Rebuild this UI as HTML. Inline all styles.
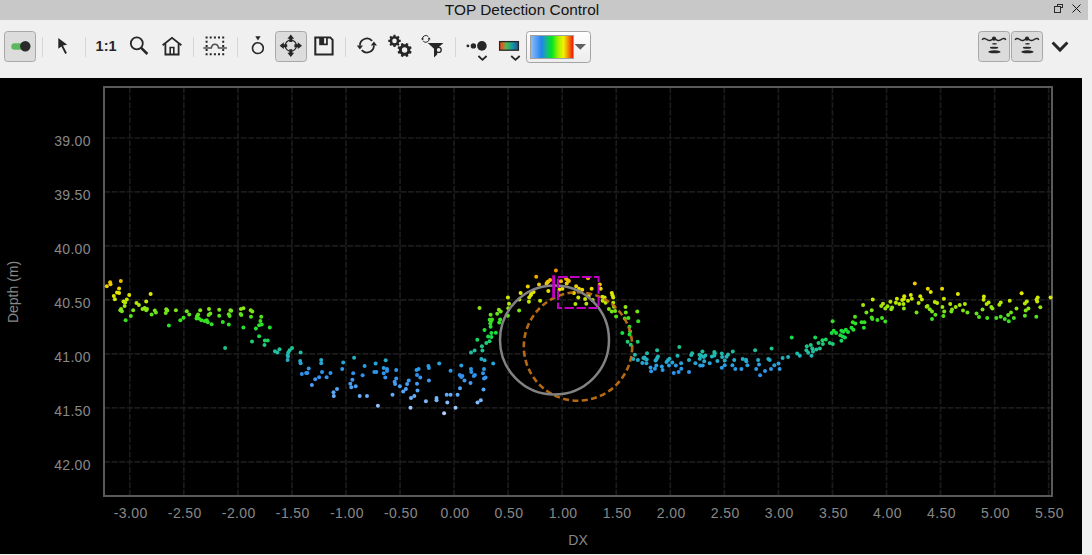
<!DOCTYPE html><html><head><meta charset="utf-8"><style>html,body{margin:0;padding:0;width:1092px;height:555px;overflow:hidden;background:#f0f0f0}svg{display:block}text{font-family:"Liberation Sans",sans-serif}</style></head><body>
<svg width="1092" height="555" viewBox="0 0 1092 555">
<rect x="0" y="0" width="1092" height="555" fill="#f0f0f0"/>
<rect x="0" y="0" width="1088" height="20" fill="#c8c8c8"/>
<text x="522" y="15" font-size="15.4" fill="#141414" text-anchor="middle">TOP Detection Control</text>
<g fill="none" stroke="#2c2c2c" stroke-width="1"><rect x="1057.5" y="4.5" width="5" height="3"/><rect x="1054.5" y="6.5" width="6" height="6" fill="#c8c8c8"/></g>
<path d="M1072.5,4.5 L1080.5,12.5 M1080.5,4.5 L1072.5,12.5" stroke="#111" stroke-width="1" fill="none"/>
<rect x="0" y="20" width="1092" height="58" fill="#f0f0f0"/>
<g id="icons"><rect x="4.5" y="31.5" width="31" height="30" rx="3" fill="#dcdcdc" stroke="#a8a8a8"/><rect x="11.3" y="43.2" width="13" height="6.6" rx="3.3" fill="#5cb85c"/><circle cx="25.3" cy="46.3" r="5.2" fill="#2a2a2a"/><path d="M42.5,37 V57 M85.5,37 V57 M193.5,37 V57 M237.5,37 V57 M345.5,37 V57 M455.5,37 V57" stroke="#d6d6d6" stroke-width="1"/><path d="M58.3,38 L67.2,44.8 L63,45.4 L66.9,53.1 L65.2,54 L61.4,46.6 L58.3,48.8 Z" fill="#262626"/><text x="95.6" y="51.2" font-size="14.5" font-weight="bold" fill="#262626">1:1</text><circle cx="136.8" cy="43.3" r="6" fill="none" stroke="#262626" stroke-width="1.8"/><path d="M141.2,47.8 L147.4,54" stroke="#262626" stroke-width="2.6" fill="none"/><g fill="none" stroke="#262626" stroke-width="1.8"><path d="M162.6,45.2 L172,37.9 L181.4,45.2"/><path d="M165.4,43.5 V54.5 H178.6 V43.5"/><path d="M170.2,54.5 V47.5 H173.8 V54.5" stroke-width="1.6"/></g><path d="M205.6,36.6 h2 v2 h-2 Z M205.6,40.8 h2 v2 h-2 Z M205.6,45.0 h2 v2 h-2 Z M205.6,49.1 h2 v2 h-2 Z M205.6,53.3 h2 v2 h-2 Z M209.7,36.6 h2 v2 h-2 Z M209.7,53.3 h2 v2 h-2 Z M213.9,36.6 h2 v2 h-2 Z M213.9,53.3 h2 v2 h-2 Z M218.0,36.6 h2 v2 h-2 Z M218.0,53.3 h2 v2 h-2 Z M222.2,36.6 h2 v2 h-2 Z M222.2,40.8 h2 v2 h-2 Z M222.2,45.0 h2 v2 h-2 Z M222.2,49.1 h2 v2 h-2 Z M222.2,53.3 h2 v2 h-2 Z" fill="#262626"/><path d="M203.3,48 H211.3 C212.3,43 217.6,43 218.6,48 H226.9" fill="none" stroke="#505050" stroke-width="1.6"/><path d="M255.3,36.3 H260.6 L257.95,40.6 Z" fill="#262626"/><circle cx="257.9" cy="48.15" r="5.4" fill="none" stroke="#262626" stroke-width="1.6"/><rect x="275.5" y="31.5" width="31" height="30" rx="3" fill="#dcdcdc" stroke="#a8a8a8"/><circle cx="290.8" cy="45.7" r="5.6" fill="none" stroke="#262626" stroke-width="1.2"/><path d="M290.80,34.50 L294.20,38.70 L287.40,38.70 Z M292.30,38.70 L292.30,42.10 L289.30,42.10 L289.30,38.70 Z M290.80,56.90 L287.40,52.70 L294.20,52.70 Z M289.30,52.70 L289.30,49.30 L292.30,49.30 L292.30,52.70 Z M279.60,45.70 L283.80,42.30 L283.80,49.10 Z M283.80,44.20 L287.20,44.20 L287.20,47.20 L283.80,47.20 Z M302.00,45.70 L297.80,49.10 L297.80,42.30 Z M297.80,47.20 L294.40,47.20 L294.40,44.20 L297.80,44.20 Z" fill="#262626"/><path d="M315.3,37.4 H330.2 L332.6,39.8 V54.6 H315.3 Z" fill="none" stroke="#262626" stroke-width="2"/><rect x="319.2" y="37.4" width="8.6" height="7.8" fill="#262626"/><rect x="324.1" y="38.2" width="2" height="5.3" fill="#f0f0f0"/><path d="M359.90,45.50 A7,7 0 0,1 372.10,40.82 M373.90,45.50 A7,7 0 0,1 361.70,50.18" fill="none" stroke="#262626" stroke-width="1.8"/><path d="M356.8,45.6 H363 L359.9,49.6 Z M370.8,45.4 H377 L373.9,41.4 Z" fill="#262626"/><path d="M393.32,36.14 L393.47,34.69 L395.53,34.69 L395.68,36.14 L397.03,36.70 L398.16,35.77 L399.63,37.24 L398.70,38.37 L399.26,39.72 L400.71,39.87 L400.71,41.93 L399.26,42.08 L398.70,43.43 L399.63,44.56 L398.16,46.03 L397.03,45.10 L395.68,45.66 L395.53,47.11 L393.47,47.11 L393.32,45.66 L391.97,45.10 L390.84,46.03 L389.37,44.56 L390.30,43.43 L389.74,42.08 L388.29,41.93 L388.29,39.87 L389.74,39.72 L390.30,38.37 L389.37,37.24 L390.84,35.77 L391.97,36.70 Z M392.20,40.90 a2.30,2.30 0 1,0 4.60,0 a2.30,2.30 0 1,0 -4.60,0 Z M410.24,50.85 L411.71,51.65 L410.79,53.86 L409.18,53.39 L407.99,54.58 L408.46,56.19 L406.25,57.11 L405.45,55.64 L403.75,55.64 L402.95,57.11 L400.74,56.19 L401.21,54.58 L400.02,53.39 L398.41,53.86 L397.49,51.65 L398.96,50.85 L398.96,49.15 L397.49,48.35 L398.41,46.14 L400.02,46.61 L401.21,45.42 L400.74,43.81 L402.95,42.89 L403.75,44.36 L405.45,44.36 L406.25,42.89 L408.46,43.81 L407.99,45.42 L409.18,46.61 L410.79,46.14 L411.71,48.35 L410.24,49.15 Z M401.90,50.00 a2.70,2.70 0 1,0 5.40,0 a2.70,2.70 0 1,0 -5.40,0 Z" fill="#262626" fill-rule="evenodd"/><path d="M422.40,38.90 A3.4,3.4 0 0,1 428.40,36.71 M429.20,38.90 A3.4,3.4 0 0,1 423.20,41.09" fill="none" stroke="#262626" stroke-width="1"/><path d="M421,38.6 H424 L422.5,40.6 Z M427.6,39.2 H430.6 L429.1,37.2 Z" fill="#262626"/><path d="M427.8,43 H443.4 L437.2,48.4 V54.6 L434,57.4 V48.7 Z" fill="#262626"/><circle cx="438.7" cy="49.9" r="2.5" fill="#f0f0f0" stroke="#262626" stroke-width="1.3"/><circle cx="467.9" cy="45.9" r="1.4" fill="#262626"/><circle cx="473.4" cy="45.9" r="2.7" fill="#262626"/><circle cx="481.9" cy="45.9" r="4.8" fill="#262626"/><path d="M478.4,56 L482.5,59.8 L486.6,56 M511.2,56 L515.5,59.8 L519.7,56" fill="none" stroke="#262626" stroke-width="1.8"/><defs><linearGradient id="cbi" x1="0" x2="1" y1="0" y2="0"><stop offset="0" stop-color="#e84a1e"/><stop offset="0.12" stop-color="#e05828"/><stop offset="0.35" stop-color="#58b848"/><stop offset="0.65" stop-color="#10a0a0"/><stop offset="1" stop-color="#2a4c9c"/></linearGradient><linearGradient id="cbb" x1="0" x2="1" y1="0" y2="0"><stop offset="0" stop-color="#94bef8"/><stop offset="0.25" stop-color="#2284f0"/><stop offset="0.37" stop-color="#18b48c"/><stop offset="0.5" stop-color="#00e81c"/><stop offset="0.64" stop-color="#a0f000"/><stop offset="0.77" stop-color="#f4f000"/><stop offset="0.87" stop-color="#f09000"/><stop offset="1" stop-color="#f01000"/></linearGradient><linearGradient id="cmb" x1="0" x2="0" y1="0" y2="1"><stop offset="0" stop-color="#ffffff"/><stop offset="1" stop-color="#ececec"/></linearGradient></defs><rect x="499.6" y="41.6" width="18.8" height="8.6" fill="url(#cbi)" stroke="#262626" stroke-width="1.3"/><rect x="526.5" y="31.5" width="64" height="31" rx="3" fill="url(#cmb)" stroke="#a4a4a4"/><rect x="530.5" y="35.5" width="43" height="23" fill="url(#cbb)" stroke="#a0a0a0"/><path d="M574.5,44 H586 L580.25,49.7 Z" fill="#606060"/><rect x="978.5" y="31.5" width="31" height="30" rx="3" fill="#dcdcdc" stroke="#a8a8a8"/><g transform="translate(0.0,0)" fill="none" stroke="#262626"><path d="M982.2,39.8 C983,38.2 984.5,38 986,39 C987.5,40.2 989,40.9 990.5,40.3 C992,39.6 993,38.8 994,38.8 C995,38.8 996,39.6 997.5,40.3 C999,40.9 1000.5,40.2 1002,39 C1003.5,38 1005,38.2 1005.8,39.8" stroke-width="1.5"/><circle cx="994" cy="38.7" r="2.1" fill="#262626" stroke="none"/><path d="M992.1,43.4 Q994.5,42.4 996.9,43.4 L996.8,44.3 Q994.5,44.9 992.2,44.3 Z" fill="#262626" stroke="none"/><path d="M990.0,47.1 Q994.1,46.2 998.1,47.1 L998,48.2 Q994.1,49.2 990.1,48.2 Z" fill="#262626" stroke="none"/><path d="M988.5,51.3 Q994.4,49.4 1000.4,51.3 L1000.2,52.4 Q994.4,54.1 988.7,52.4 Z" fill="#262626" stroke="none"/></g><rect x="1011.5" y="31.5" width="31" height="30" rx="3" fill="#dcdcdc" stroke="#a8a8a8"/><g transform="translate(33.0,0)" fill="none" stroke="#262626"><path d="M982.2,39.8 C983,38.2 984.5,38 986,39 C987.5,40.2 989,40.9 990.5,40.3 C992,39.6 993,38.8 994,38.8 C995,38.8 996,39.6 997.5,40.3 C999,40.9 1000.5,40.2 1002,39 C1003.5,38 1005,38.2 1005.8,39.8" stroke-width="1.5"/><circle cx="994" cy="38.7" r="2.1" fill="#262626" stroke="none"/><path d="M992.1,43.4 Q994.5,42.4 996.9,43.4 L996.8,44.3 Q994.5,44.9 992.2,44.3 Z" fill="#262626" stroke="none"/><path d="M990.0,47.1 Q994.1,46.2 998.1,47.1 L998,48.2 Q994.1,49.2 990.1,48.2 Z" fill="#262626" stroke="none"/><path d="M988.5,51.3 Q994.4,49.4 1000.4,51.3 L1000.2,52.4 Q994.4,54.1 988.7,52.4 Z" fill="#262626" stroke="none"/></g><path d="M1052.6,42.5 L1060,50 L1067.4,42.5" fill="none" stroke="#262626" stroke-width="3"/></g>
<rect x="0" y="78" width="1082" height="476" fill="#000"/>
<path d="M129.80,87 V496 M183.85,87 V496 M237.90,87 V496 M291.95,87 V496 M346.00,87 V496 M400.05,87 V496 M454.10,87 V496 M508.15,87 V496 M562.20,87 V496 M616.25,87 V496 M670.30,87 V496 M724.35,87 V496 M778.40,87 V496 M832.45,87 V496 M886.50,87 V496 M940.55,87 V496 M994.60,87 V496 M1048.65,87 V496 M104,138.00 H1052 M104,191.97 H1052 M104,245.95 H1052 M104,299.93 H1052 M104,353.90 H1052 M104,407.88 H1052 M104,461.85 H1052" stroke="#1b1b1b" stroke-width="1.7" stroke-dasharray="6 1.6" fill="none"/>
<rect x="104.0" y="87.0" width="948" height="409" fill="none" stroke="#5a5a5a" stroke-width="2"/>
<text x="90.8" y="146.0" font-size="14" letter-spacing="0.3" fill="#888888" text-anchor="end">39.00</text>
<text x="90.8" y="200.0" font-size="14" letter-spacing="0.3" fill="#888888" text-anchor="end">39.50</text>
<text x="90.8" y="253.9" font-size="14" letter-spacing="0.3" fill="#888888" text-anchor="end">40.00</text>
<text x="90.8" y="307.9" font-size="14" letter-spacing="0.3" fill="#888888" text-anchor="end">40.50</text>
<text x="90.8" y="361.9" font-size="14" letter-spacing="0.3" fill="#888888" text-anchor="end">41.00</text>
<text x="90.8" y="415.9" font-size="14" letter-spacing="0.3" fill="#888888" text-anchor="end">41.50</text>
<text x="90.8" y="469.9" font-size="14" letter-spacing="0.3" fill="#888888" text-anchor="end">42.00</text>
<text x="130.7" y="518" font-size="14" letter-spacing="0.4" fill="#888888" text-anchor="middle">-3.00</text>
<text x="184.8" y="518" font-size="14" letter-spacing="0.4" fill="#888888" text-anchor="middle">-2.50</text>
<text x="238.8" y="518" font-size="14" letter-spacing="0.4" fill="#888888" text-anchor="middle">-2.00</text>
<text x="292.8" y="518" font-size="14" letter-spacing="0.4" fill="#888888" text-anchor="middle">-1.50</text>
<text x="346.9" y="518" font-size="14" letter-spacing="0.4" fill="#888888" text-anchor="middle">-1.00</text>
<text x="400.9" y="518" font-size="14" letter-spacing="0.4" fill="#888888" text-anchor="middle">-0.50</text>
<text x="455.0" y="518" font-size="14" letter-spacing="0.4" fill="#888888" text-anchor="middle">0.00</text>
<text x="509.0" y="518" font-size="14" letter-spacing="0.4" fill="#888888" text-anchor="middle">0.50</text>
<text x="563.1" y="518" font-size="14" letter-spacing="0.4" fill="#888888" text-anchor="middle">1.00</text>
<text x="617.1" y="518" font-size="14" letter-spacing="0.4" fill="#888888" text-anchor="middle">1.50</text>
<text x="671.2" y="518" font-size="14" letter-spacing="0.4" fill="#888888" text-anchor="middle">2.00</text>
<text x="725.2" y="518" font-size="14" letter-spacing="0.4" fill="#888888" text-anchor="middle">2.50</text>
<text x="779.3" y="518" font-size="14" letter-spacing="0.4" fill="#888888" text-anchor="middle">3.00</text>
<text x="833.4" y="518" font-size="14" letter-spacing="0.4" fill="#888888" text-anchor="middle">3.50</text>
<text x="887.4" y="518" font-size="14" letter-spacing="0.4" fill="#888888" text-anchor="middle">4.00</text>
<text x="941.4" y="518" font-size="14" letter-spacing="0.4" fill="#888888" text-anchor="middle">4.50</text>
<text x="995.5" y="518" font-size="14" letter-spacing="0.4" fill="#888888" text-anchor="middle">5.00</text>
<text x="1049.5" y="518" font-size="14" letter-spacing="0.4" fill="#888888" text-anchor="middle">5.50</text>
<text x="578" y="545" font-size="14" fill="#888888" text-anchor="middle">DX</text>
<text transform="translate(18,292) rotate(-90)" x="0" y="0" font-size="14" fill="#888888" text-anchor="middle">Depth (m)</text>
<g>
<circle cx="106.8" cy="286.2" r="2" fill="#edcf00"/>
<circle cx="110.1" cy="282.2" r="2" fill="#f0c100"/>
<circle cx="110.5" cy="284.3" r="2" fill="#eec800"/>
<circle cx="120.8" cy="281.0" r="2" fill="#f0bc00"/>
<circle cx="119.1" cy="288.6" r="2" fill="#ebd800"/>
<circle cx="117.0" cy="292.4" r="2" fill="#e8e600"/>
<circle cx="119.1" cy="293.0" r="2" fill="#e8e800"/>
<circle cx="113.8" cy="295.9" r="2" fill="#dae800"/>
<circle cx="114.9" cy="299.2" r="2" fill="#cae800"/>
<circle cx="129.2" cy="295.1" r="2" fill="#dee800"/>
<circle cx="126.8" cy="299.5" r="2" fill="#c9e800"/>
<circle cx="123.5" cy="301.6" r="2" fill="#bfe800"/>
<circle cx="125.1" cy="302.4" r="2" fill="#bbe800"/>
<circle cx="124.6" cy="306.0" r="2" fill="#a0e60a"/>
<circle cx="120.3" cy="310.2" r="2" fill="#7ee418"/>
<circle cx="121.9" cy="311.3" r="2" fill="#76e319"/>
<circle cx="121.1" cy="308.9" r="2" fill="#89e514"/>
<circle cx="125.6" cy="320.3" r="2" fill="#37e021"/>
<circle cx="130.8" cy="315.9" r="2" fill="#56e21d"/>
<circle cx="133.2" cy="310.2" r="2" fill="#7ee418"/>
<circle cx="136.5" cy="302.9" r="2" fill="#b8e800"/>
<circle cx="138.9" cy="304.9" r="2" fill="#a9e706"/>
<circle cx="146.2" cy="301.6" r="2" fill="#bfe800"/>
<circle cx="150.6" cy="294.0" r="2" fill="#e3e800"/>
<circle cx="142.5" cy="308.9" r="2" fill="#89e514"/>
<circle cx="144.6" cy="308.1" r="2" fill="#8fe512"/>
<circle cx="146.2" cy="310.2" r="2" fill="#7ee418"/>
<circle cx="147.0" cy="308.9" r="2" fill="#89e514"/>
<circle cx="151.6" cy="314.6" r="2" fill="#5fe21c"/>
<circle cx="154.8" cy="310.5" r="2" fill="#7ce418"/>
<circle cx="155.9" cy="312.5" r="2" fill="#6ee31a"/>
<circle cx="166.2" cy="309.2" r="2" fill="#86e415"/>
<circle cx="165.7" cy="313.0" r="2" fill="#6be31a"/>
<circle cx="167.3" cy="310.5" r="2" fill="#7ce418"/>
<circle cx="168.9" cy="325.5" r="2" fill="#2be02c"/>
<circle cx="175.9" cy="310.2" r="2" fill="#7ee418"/>
<circle cx="180.3" cy="320.3" r="2" fill="#37e021"/>
<circle cx="183.5" cy="317.8" r="2" fill="#48e11e"/>
<circle cx="186.8" cy="311.3" r="2" fill="#76e319"/>
<circle cx="189.2" cy="314.6" r="2" fill="#5fe21c"/>
<circle cx="197.0" cy="316.2" r="2" fill="#53e21d"/>
<circle cx="198.1" cy="314.6" r="2" fill="#5fe21c"/>
<circle cx="196.5" cy="318.6" r="2" fill="#42e11f"/>
<circle cx="198.9" cy="318.6" r="2" fill="#42e11f"/>
<circle cx="200.2" cy="310.2" r="2" fill="#7ee418"/>
<circle cx="201.3" cy="320.3" r="2" fill="#37e021"/>
<circle cx="204.6" cy="321.1" r="2" fill="#35e022"/>
<circle cx="206.7" cy="320.3" r="2" fill="#37e021"/>
<circle cx="207.8" cy="322.2" r="2" fill="#33e025"/>
<circle cx="211.6" cy="324.3" r="2" fill="#2ee029"/>
<circle cx="209.0" cy="308.9" r="2" fill="#89e514"/>
<circle cx="208.6" cy="315.1" r="2" fill="#5be21c"/>
<circle cx="210.3" cy="313.5" r="2" fill="#67e31b"/>
<circle cx="219.2" cy="309.7" r="2" fill="#82e417"/>
<circle cx="219.2" cy="315.7" r="2" fill="#57e21d"/>
<circle cx="950.2" cy="304.0" r="2" fill="#b0e703"/>
<circle cx="952.0" cy="309.5" r="2" fill="#84e416"/>
<circle cx="951.3" cy="311.6" r="2" fill="#74e319"/>
<circle cx="955.7" cy="306.9" r="2" fill="#99e60d"/>
<circle cx="959.7" cy="305.1" r="2" fill="#a8e707"/>
<circle cx="957.9" cy="294.1" r="2" fill="#e3e800"/>
<circle cx="964.9" cy="304.0" r="2" fill="#b0e703"/>
<circle cx="963.0" cy="310.5" r="2" fill="#7ce418"/>
<circle cx="967.4" cy="312.4" r="2" fill="#6fe31a"/>
<circle cx="976.5" cy="313.5" r="2" fill="#67e31b"/>
<circle cx="979.0" cy="317.1" r="2" fill="#4de11e"/>
<circle cx="982.5" cy="309.5" r="2" fill="#84e416"/>
<circle cx="983.9" cy="296.5" r="2" fill="#d7e800"/>
<circle cx="983.6" cy="299.8" r="2" fill="#c7e800"/>
<circle cx="986.6" cy="304.0" r="2" fill="#b0e703"/>
<circle cx="988.6" cy="302.5" r="2" fill="#bae800"/>
<circle cx="987.2" cy="317.9" r="2" fill="#47e11e"/>
<circle cx="991.3" cy="306.9" r="2" fill="#99e60d"/>
<circle cx="992.4" cy="308.4" r="2" fill="#8de512"/>
<circle cx="996.3" cy="317.9" r="2" fill="#47e11e"/>
<circle cx="999.3" cy="304.7" r="2" fill="#aae706"/>
<circle cx="1000.7" cy="302.5" r="2" fill="#bae800"/>
<circle cx="1000.7" cy="316.8" r="2" fill="#4fe11d"/>
<circle cx="1004.8" cy="319.0" r="2" fill="#3fe01f"/>
<circle cx="1008.1" cy="314.9" r="2" fill="#5ce21c"/>
<circle cx="1011.0" cy="312.4" r="2" fill="#6fe31a"/>
<circle cx="1008.8" cy="321.2" r="2" fill="#35e023"/>
<circle cx="1009.7" cy="300.7" r="2" fill="#c3e800"/>
<circle cx="1013.9" cy="317.9" r="2" fill="#47e11e"/>
<circle cx="1016.5" cy="308.4" r="2" fill="#8de512"/>
<circle cx="1021.6" cy="293.2" r="2" fill="#e7e800"/>
<circle cx="1024.9" cy="303.6" r="2" fill="#b3e802"/>
<circle cx="1026.8" cy="301.4" r="2" fill="#c0e800"/>
<circle cx="1025.7" cy="310.5" r="2" fill="#7ce418"/>
<circle cx="1028.4" cy="308.4" r="2" fill="#8de512"/>
<circle cx="1024.9" cy="315.7" r="2" fill="#57e21d"/>
<circle cx="1037.7" cy="297.4" r="2" fill="#d3e800"/>
<circle cx="1037.2" cy="301.4" r="2" fill="#c0e800"/>
<circle cx="1036.6" cy="299.6" r="2" fill="#c9e800"/>
<circle cx="1040.3" cy="307.3" r="2" fill="#96e60f"/>
<circle cx="1036.3" cy="316.8" r="2" fill="#4fe11d"/>
<circle cx="1050.6" cy="297.4" r="2" fill="#d3e800"/>
<circle cx="230.4" cy="310.3" r="2" fill="#7ee418"/>
<circle cx="231.2" cy="310.8" r="2" fill="#7be419"/>
<circle cx="228.8" cy="314.3" r="2" fill="#61e21b"/>
<circle cx="229.6" cy="315.9" r="2" fill="#55e21d"/>
<circle cx="222.8" cy="322.1" r="2" fill="#33e024"/>
<circle cx="228.8" cy="324.4" r="2" fill="#2de029"/>
<circle cx="225.1" cy="348.1" r="2" fill="#20c38f"/>
<circle cx="240.9" cy="309.1" r="2" fill="#87e415"/>
<circle cx="243.4" cy="308.2" r="2" fill="#8fe512"/>
<circle cx="240.6" cy="314.0" r="2" fill="#63e21b"/>
<circle cx="241.3" cy="315.1" r="2" fill="#5be21c"/>
<circle cx="243.4" cy="327.6" r="2" fill="#26e030"/>
<circle cx="250.7" cy="310.3" r="2" fill="#7ee418"/>
<circle cx="252.3" cy="311.4" r="2" fill="#76e319"/>
<circle cx="251.0" cy="316.8" r="2" fill="#4fe11d"/>
<circle cx="261.2" cy="316.8" r="2" fill="#4fe11d"/>
<circle cx="260.4" cy="321.1" r="2" fill="#35e022"/>
<circle cx="259.1" cy="325.3" r="2" fill="#2be02b"/>
<circle cx="261.7" cy="324.4" r="2" fill="#2de029"/>
<circle cx="255.9" cy="328.6" r="2" fill="#23e032"/>
<circle cx="269.8" cy="327.6" r="2" fill="#26e030"/>
<circle cx="259.1" cy="336.2" r="2" fill="#15dd48"/>
<circle cx="252.0" cy="341.6" r="2" fill="#1cd06a"/>
<circle cx="264.9" cy="340.6" r="2" fill="#1bd364"/>
<circle cx="267.7" cy="340.6" r="2" fill="#1bd364"/>
<circle cx="264.5" cy="345.1" r="2" fill="#20c881"/>
<circle cx="275.0" cy="351.3" r="2" fill="#20be9e"/>
<circle cx="277.4" cy="352.4" r="2" fill="#20bca4"/>
<circle cx="279.5" cy="349.2" r="2" fill="#20c194"/>
<circle cx="292.0" cy="348.1" r="2" fill="#20c38f"/>
<circle cx="289.6" cy="350.3" r="2" fill="#20bf9a"/>
<circle cx="288.3" cy="352.4" r="2" fill="#20bca4"/>
<circle cx="287.6" cy="354.9" r="2" fill="#20b8af"/>
<circle cx="288.0" cy="356.5" r="2" fill="#21b4b7"/>
<circle cx="287.6" cy="360.1" r="2" fill="#24acc8"/>
<circle cx="300.6" cy="352.4" r="2" fill="#20bca4"/>
<circle cx="300.1" cy="361.0" r="2" fill="#25aacd"/>
<circle cx="300.6" cy="363.3" r="2" fill="#27a4d8"/>
<circle cx="321.2" cy="360.1" r="2" fill="#24acc8"/>
<circle cx="321.2" cy="363.3" r="2" fill="#27a4d8"/>
<circle cx="308.7" cy="368.6" r="2" fill="#2b9ae6"/>
<circle cx="306.1" cy="373.0" r="2" fill="#2e93ed"/>
<circle cx="307.4" cy="373.0" r="2" fill="#2e93ed"/>
<circle cx="301.8" cy="374.0" r="2" fill="#2f92ee"/>
<circle cx="322.0" cy="371.9" r="2" fill="#2e95eb"/>
<circle cx="330.5" cy="373.0" r="2" fill="#2e93ed"/>
<circle cx="319.1" cy="377.2" r="2" fill="#3593f1"/>
<circle cx="326.6" cy="377.2" r="2" fill="#3593f1"/>
<circle cx="315.2" cy="379.2" r="2" fill="#3a96f2"/>
<circle cx="311.9" cy="385.1" r="2" fill="#489ef4"/>
<circle cx="333.5" cy="392.2" r="2" fill="#59a8f7"/>
<circle cx="333.8" cy="395.9" r="2" fill="#64aef8"/>
<circle cx="337.0" cy="389.1" r="2" fill="#52a4f6"/>
<circle cx="342.2" cy="368.9" r="2" fill="#2b9ae6"/>
<circle cx="343.2" cy="362.4" r="2" fill="#26a6d3"/>
<circle cx="354.1" cy="357.8" r="2" fill="#22b1be"/>
<circle cx="353.2" cy="373.2" r="2" fill="#2f93ed"/>
<circle cx="352.4" cy="379.7" r="2" fill="#3b97f2"/>
<circle cx="350.3" cy="383.8" r="2" fill="#459cf4"/>
<circle cx="351.3" cy="387.3" r="2" fill="#4ea1f5"/>
<circle cx="355.7" cy="386.2" r="2" fill="#4ba0f4"/>
<circle cx="359.7" cy="395.9" r="2" fill="#64aef8"/>
<circle cx="367.0" cy="395.9" r="2" fill="#64aef8"/>
<circle cx="362.6" cy="375.3" r="2" fill="#3190f0"/>
<circle cx="364.6" cy="365.9" r="2" fill="#299ee2"/>
<circle cx="375.6" cy="363.5" r="2" fill="#27a4d9"/>
<circle cx="374.3" cy="372.1" r="2" fill="#2e95eb"/>
<circle cx="376.3" cy="372.1" r="2" fill="#2e95eb"/>
<circle cx="377.9" cy="405.7" r="2" fill="#8fc1fc"/>
<circle cx="385.7" cy="360.3" r="2" fill="#24abc9"/>
<circle cx="383.7" cy="367.9" r="2" fill="#2a9be5"/>
<circle cx="387.0" cy="368.9" r="2" fill="#2b9ae6"/>
<circle cx="387.0" cy="371.1" r="2" fill="#2d96ea"/>
<circle cx="383.7" cy="373.2" r="2" fill="#2f93ed"/>
<circle cx="385.3" cy="377.6" r="2" fill="#3694f1"/>
<circle cx="392.5" cy="394.8" r="2" fill="#60acf8"/>
<circle cx="396.2" cy="370.0" r="2" fill="#2c98e8"/>
<circle cx="396.2" cy="378.6" r="2" fill="#3995f1"/>
<circle cx="394.6" cy="381.8" r="2" fill="#409af3"/>
<circle cx="395.1" cy="384.1" r="2" fill="#469df4"/>
<circle cx="399.9" cy="386.2" r="2" fill="#4ba0f4"/>
<circle cx="403.2" cy="391.6" r="2" fill="#58a7f7"/>
<circle cx="405.9" cy="389.0" r="2" fill="#52a4f6"/>
<circle cx="407.1" cy="384.1" r="2" fill="#469df4"/>
<circle cx="408.7" cy="380.5" r="2" fill="#3d98f2"/>
<circle cx="410.5" cy="407.8" r="2" fill="#99c6fd"/>
<circle cx="411.0" cy="398.1" r="2" fill="#6eb2f9"/>
<circle cx="414.3" cy="395.9" r="2" fill="#64aef8"/>
<circle cx="417.0" cy="383.8" r="2" fill="#459cf4"/>
<circle cx="417.5" cy="390.6" r="2" fill="#55a6f6"/>
<circle cx="417.0" cy="374.9" r="2" fill="#3090f0"/>
<circle cx="420.3" cy="377.6" r="2" fill="#3694f1"/>
<circle cx="416.5" cy="370.0" r="2" fill="#2c98e8"/>
<circle cx="418.6" cy="368.9" r="2" fill="#2b9ae6"/>
<circle cx="428.4" cy="365.9" r="2" fill="#299ee2"/>
<circle cx="428.9" cy="367.9" r="2" fill="#2a9be5"/>
<circle cx="428.9" cy="380.5" r="2" fill="#3d98f2"/>
<circle cx="425.9" cy="401.3" r="2" fill="#7cb9fa"/>
<circle cx="436.5" cy="398.1" r="2" fill="#6eb2f9"/>
<circle cx="436.5" cy="400.3" r="2" fill="#78b7fa"/>
<circle cx="439.2" cy="363.5" r="2" fill="#27a4d9"/>
<circle cx="444.1" cy="413.3" r="2" fill="#b0d0ff"/>
<circle cx="446.7" cy="394.8" r="2" fill="#60acf8"/>
<circle cx="450.6" cy="394.8" r="2" fill="#60acf8"/>
<circle cx="447.3" cy="402.4" r="2" fill="#81bbfb"/>
<circle cx="450.6" cy="370.8" r="2" fill="#2d97e9"/>
<circle cx="455.5" cy="407.8" r="2" fill="#99c6fd"/>
<circle cx="457.6" cy="394.8" r="2" fill="#60acf8"/>
<circle cx="460.0" cy="388.3" r="2" fill="#50a3f5"/>
<circle cx="459.7" cy="374.9" r="2" fill="#3090f0"/>
<circle cx="461.3" cy="377.0" r="2" fill="#3593f1"/>
<circle cx="462.4" cy="376.0" r="2" fill="#3291f0"/>
<circle cx="464.5" cy="380.5" r="2" fill="#3d98f2"/>
<circle cx="461.3" cy="365.6" r="2" fill="#289fe1"/>
<circle cx="471.0" cy="368.9" r="2" fill="#2b9ae6"/>
<circle cx="471.3" cy="372.1" r="2" fill="#2e95eb"/>
<circle cx="473.8" cy="376.0" r="2" fill="#3291f0"/>
<circle cx="474.9" cy="374.9" r="2" fill="#3090f0"/>
<circle cx="470.5" cy="383.0" r="2" fill="#439bf3"/>
<circle cx="471.0" cy="352.6" r="2" fill="#20bca5"/>
<circle cx="474.6" cy="350.5" r="2" fill="#20bf9b"/>
<circle cx="481.9" cy="346.2" r="2" fill="#20c686"/>
<circle cx="482.4" cy="350.5" r="2" fill="#20bf9b"/>
<circle cx="486.3" cy="342.9" r="2" fill="#1ecd73"/>
<circle cx="489.5" cy="341.3" r="2" fill="#1cd168"/>
<circle cx="481.4" cy="359.1" r="2" fill="#23aec4"/>
<circle cx="484.6" cy="360.3" r="2" fill="#24abc9"/>
<circle cx="493.2" cy="363.5" r="2" fill="#27a4d9"/>
<circle cx="484.0" cy="368.9" r="2" fill="#2b9ae6"/>
<circle cx="483.0" cy="373.2" r="2" fill="#2f93ed"/>
<circle cx="484.0" cy="378.6" r="2" fill="#3995f1"/>
<circle cx="485.6" cy="377.6" r="2" fill="#3694f1"/>
<circle cx="483.5" cy="389.5" r="2" fill="#53a4f6"/>
<circle cx="477.5" cy="402.4" r="2" fill="#81bbfb"/>
<circle cx="480.8" cy="400.3" r="2" fill="#78b7fa"/>
<circle cx="479.5" cy="308.0" r="2" fill="#90e511"/>
<circle cx="490.6" cy="314.8" r="2" fill="#5ee21c"/>
<circle cx="489.6" cy="319.8" r="2" fill="#39e020"/>
<circle cx="491.0" cy="321.3" r="2" fill="#35e023"/>
<circle cx="490.3" cy="323.4" r="2" fill="#30e027"/>
<circle cx="492.0" cy="319.5" r="2" fill="#3be020"/>
<circle cx="490.6" cy="326.7" r="2" fill="#28e02e"/>
<circle cx="484.5" cy="329.9" r="2" fill="#20e035"/>
<circle cx="491.4" cy="333.1" r="2" fill="#19e03c"/>
<circle cx="495.8" cy="332.8" r="2" fill="#19e03b"/>
<circle cx="488.1" cy="336.4" r="2" fill="#16dd49"/>
<circle cx="491.4" cy="337.1" r="2" fill="#17db4e"/>
<circle cx="477.3" cy="339.7" r="2" fill="#1ad55e"/>
<circle cx="498.9" cy="309.7" r="2" fill="#82e417"/>
<circle cx="500.7" cy="311.4" r="2" fill="#76e319"/>
<circle cx="497.2" cy="313.8" r="2" fill="#65e21b"/>
<circle cx="500.1" cy="319.5" r="2" fill="#3be020"/>
<circle cx="499.2" cy="322.4" r="2" fill="#32e025"/>
<circle cx="508.3" cy="308.3" r="2" fill="#8ee512"/>
<circle cx="509.0" cy="303.7" r="2" fill="#b3e802"/>
<circle cx="507.9" cy="315.8" r="2" fill="#56e21d"/>
<circle cx="507.9" cy="297.5" r="2" fill="#d3e800"/>
<circle cx="519.1" cy="310.4" r="2" fill="#7de418"/>
<circle cx="520.6" cy="293.1" r="2" fill="#e7e800"/>
<circle cx="519.4" cy="299.6" r="2" fill="#c8e800"/>
<circle cx="527.8" cy="286.6" r="2" fill="#edd100"/>
<circle cx="529.2" cy="297.5" r="2" fill="#d3e800"/>
<circle cx="530.7" cy="295.3" r="2" fill="#dde800"/>
<circle cx="531.4" cy="293.8" r="2" fill="#e4e800"/>
<circle cx="528.9" cy="301.8" r="2" fill="#bee800"/>
<circle cx="533.6" cy="292.1" r="2" fill="#e9e500"/>
<circle cx="536.2" cy="276.8" r="2" fill="#f0ab00"/>
<circle cx="539.0" cy="284.5" r="2" fill="#eec900"/>
<circle cx="540.1" cy="300.8" r="2" fill="#c3e800"/>
<circle cx="546.5" cy="283.8" r="2" fill="#efc600"/>
<circle cx="548.3" cy="281.6" r="2" fill="#f0be00"/>
<circle cx="550.1" cy="280.1" r="2" fill="#f0b900"/>
<circle cx="547.3" cy="282.3" r="2" fill="#f0c100"/>
<circle cx="548.3" cy="291.0" r="2" fill="#e9e100"/>
<circle cx="555.9" cy="270.5" r="2" fill="#f09200"/>
<circle cx="561.0" cy="281.2" r="2" fill="#f0bd00"/>
<circle cx="559.5" cy="289.5" r="2" fill="#ebdb00"/>
<circle cx="566.0" cy="278.7" r="2" fill="#f0b300"/>
<circle cx="567.5" cy="280.1" r="2" fill="#f0b900"/>
<circle cx="566.7" cy="283.5" r="2" fill="#efc500"/>
<circle cx="568.9" cy="280.9" r="2" fill="#f0bb00"/>
<circle cx="562.4" cy="288.8" r="2" fill="#ebd900"/>
<circle cx="575.4" cy="303.9" r="2" fill="#b0e703"/>
<circle cx="576.1" cy="286.3" r="2" fill="#edd000"/>
<circle cx="579.0" cy="288.8" r="2" fill="#ebd900"/>
<circle cx="573.9" cy="293.1" r="2" fill="#e7e800"/>
<circle cx="578.3" cy="297.5" r="2" fill="#d3e800"/>
<circle cx="588.0" cy="278.3" r="2" fill="#f0b100"/>
<circle cx="599.8" cy="284.5" r="2" fill="#eec900"/>
<circle cx="600.7" cy="288.8" r="2" fill="#ebd900"/>
<circle cx="591.6" cy="288.8" r="2" fill="#ebd900"/>
<circle cx="582.2" cy="289.8" r="2" fill="#eadc00"/>
<circle cx="585.1" cy="298.9" r="2" fill="#cce800"/>
<circle cx="588.7" cy="296.0" r="2" fill="#dae800"/>
<circle cx="586.3" cy="303.7" r="2" fill="#b3e802"/>
<circle cx="592.6" cy="299.9" r="2" fill="#c7e800"/>
<circle cx="602.4" cy="296.7" r="2" fill="#d6e800"/>
<circle cx="604.6" cy="297.5" r="2" fill="#d3e800"/>
<circle cx="602.7" cy="300.8" r="2" fill="#c3e800"/>
<circle cx="605.6" cy="302.8" r="2" fill="#b9e800"/>
<circle cx="611.8" cy="293.1" r="2" fill="#e7e800"/>
<circle cx="612.5" cy="295.3" r="2" fill="#dde800"/>
<circle cx="613.2" cy="297.5" r="2" fill="#d3e800"/>
<circle cx="613.2" cy="302.8" r="2" fill="#b9e800"/>
<circle cx="613.9" cy="306.8" r="2" fill="#99e60d"/>
<circle cx="608.9" cy="309.0" r="2" fill="#88e515"/>
<circle cx="611.8" cy="311.4" r="2" fill="#76e319"/>
<circle cx="615.1" cy="310.9" r="2" fill="#7ae419"/>
<circle cx="616.1" cy="316.6" r="2" fill="#50e11d"/>
<circle cx="625.5" cy="307.1" r="2" fill="#97e60e"/>
<circle cx="625.8" cy="312.6" r="2" fill="#6de31a"/>
<circle cx="624.8" cy="318.4" r="2" fill="#44e11f"/>
<circle cx="628.4" cy="318.1" r="2" fill="#46e11e"/>
<circle cx="637.3" cy="311.4" r="2" fill="#76e319"/>
<circle cx="638.2" cy="321.3" r="2" fill="#35e023"/>
<circle cx="629.5" cy="326.7" r="2" fill="#28e02e"/>
<circle cx="622.3" cy="333.1" r="2" fill="#19e03c"/>
<circle cx="630.1" cy="331.6" r="2" fill="#1ce039"/>
<circle cx="629.5" cy="334.5" r="2" fill="#15e03f"/>
<circle cx="627.6" cy="341.7" r="2" fill="#1cd06b"/>
<circle cx="637.7" cy="341.7" r="2" fill="#1cd06b"/>
<circle cx="630.8" cy="344.8" r="2" fill="#20c87f"/>
<circle cx="634.9" cy="354.7" r="2" fill="#20b8af"/>
<circle cx="633.2" cy="359.1" r="2" fill="#23aec4"/>
<circle cx="637.9" cy="359.9" r="2" fill="#24acc7"/>
<circle cx="642.3" cy="363.0" r="2" fill="#26a5d6"/>
<circle cx="646.4" cy="363.2" r="2" fill="#27a4d7"/>
<circle cx="643.4" cy="358.0" r="2" fill="#22b1bf"/>
<circle cx="645.1" cy="358.8" r="2" fill="#23afc2"/>
<circle cx="646.7" cy="359.5" r="2" fill="#24adc5"/>
<circle cx="644.5" cy="357.5" r="2" fill="#22b2bc"/>
<circle cx="647.0" cy="353.3" r="2" fill="#20bba8"/>
<circle cx="650.5" cy="367.6" r="2" fill="#2a9ce4"/>
<circle cx="651.1" cy="371.2" r="2" fill="#2d96ea"/>
<circle cx="654.9" cy="368.7" r="2" fill="#2b9ae6"/>
<circle cx="656.3" cy="365.4" r="2" fill="#289fe1"/>
<circle cx="657.1" cy="350.3" r="2" fill="#20bf9a"/>
<circle cx="656.3" cy="359.7" r="2" fill="#24adc6"/>
<circle cx="657.1" cy="358.0" r="2" fill="#22b1bf"/>
<circle cx="658.0" cy="356.6" r="2" fill="#21b4b8"/>
<circle cx="655.5" cy="360.5" r="2" fill="#24abcb"/>
<circle cx="661.8" cy="366.5" r="2" fill="#299ee2"/>
<circle cx="662.6" cy="370.1" r="2" fill="#2c98e8"/>
<circle cx="666.5" cy="362.1" r="2" fill="#26a7d2"/>
<circle cx="667.9" cy="360.2" r="2" fill="#24abc9"/>
<circle cx="669.5" cy="358.8" r="2" fill="#23afc2"/>
<circle cx="669.0" cy="365.4" r="2" fill="#289fe1"/>
<circle cx="672.3" cy="362.4" r="2" fill="#26a6d4"/>
<circle cx="675.8" cy="365.4" r="2" fill="#289fe1"/>
<circle cx="677.5" cy="355.8" r="2" fill="#21b6b4"/>
<circle cx="679.3" cy="347.0" r="2" fill="#20c58a"/>
<circle cx="681.1" cy="363.2" r="2" fill="#27a4d7"/>
<circle cx="681.3" cy="368.7" r="2" fill="#2b9ae6"/>
<circle cx="678.6" cy="372.0" r="2" fill="#2e95eb"/>
<circle cx="673.8" cy="373.1" r="2" fill="#2e93ed"/>
<circle cx="689.0" cy="372.0" r="2" fill="#2e95eb"/>
<circle cx="689.0" cy="359.9" r="2" fill="#24acc7"/>
<circle cx="691.2" cy="355.1" r="2" fill="#20b8b0"/>
<circle cx="692.1" cy="353.3" r="2" fill="#20bba8"/>
<circle cx="695.4" cy="363.2" r="2" fill="#27a4d7"/>
<circle cx="699.8" cy="358.8" r="2" fill="#23afc2"/>
<circle cx="700.2" cy="365.4" r="2" fill="#289fe1"/>
<circle cx="702.7" cy="365.4" r="2" fill="#289fe1"/>
<circle cx="699.5" cy="354.7" r="2" fill="#20b8af"/>
<circle cx="701.1" cy="355.8" r="2" fill="#21b6b4"/>
<circle cx="703.8" cy="356.9" r="2" fill="#22b3b9"/>
<circle cx="705.3" cy="355.5" r="2" fill="#20b7b2"/>
<circle cx="702.4" cy="351.4" r="2" fill="#20be9f"/>
<circle cx="704.2" cy="361.3" r="2" fill="#25a9ce"/>
<circle cx="709.7" cy="363.2" r="2" fill="#27a4d7"/>
<circle cx="711.9" cy="356.6" r="2" fill="#21b4b8"/>
<circle cx="714.3" cy="355.5" r="2" fill="#20b7b2"/>
<circle cx="714.8" cy="353.3" r="2" fill="#20bba8"/>
<circle cx="714.3" cy="352.0" r="2" fill="#20bda1"/>
<circle cx="717.4" cy="361.0" r="2" fill="#25aacd"/>
<circle cx="721.8" cy="353.5" r="2" fill="#20baa9"/>
<circle cx="722.1" cy="357.1" r="2" fill="#22b3ba"/>
<circle cx="724.7" cy="360.4" r="2" fill="#24abca"/>
<circle cx="724.7" cy="365.3" r="2" fill="#28a0e0"/>
<circle cx="721.8" cy="367.8" r="2" fill="#2a9ce4"/>
<circle cx="728.0" cy="354.6" r="2" fill="#20b9ae"/>
<circle cx="726.5" cy="356.8" r="2" fill="#21b4b9"/>
<circle cx="732.8" cy="351.6" r="2" fill="#20bda0"/>
<circle cx="734.2" cy="360.1" r="2" fill="#24acc9"/>
<circle cx="732.4" cy="365.3" r="2" fill="#28a0e0"/>
<circle cx="735.3" cy="368.9" r="2" fill="#2b9ae6"/>
<circle cx="741.4" cy="368.9" r="2" fill="#2b9ae6"/>
<circle cx="742.7" cy="359.0" r="2" fill="#23aec3"/>
<circle cx="746.0" cy="359.8" r="2" fill="#24adc7"/>
<circle cx="746.3" cy="361.2" r="2" fill="#25a9ce"/>
<circle cx="747.4" cy="365.3" r="2" fill="#28a0e0"/>
<circle cx="755.1" cy="350.2" r="2" fill="#20c099"/>
<circle cx="758.1" cy="360.1" r="2" fill="#24acc9"/>
<circle cx="759.0" cy="364.5" r="2" fill="#28a1de"/>
<circle cx="756.2" cy="368.9" r="2" fill="#2b9ae6"/>
<circle cx="760.1" cy="375.2" r="2" fill="#3090f0"/>
<circle cx="765.0" cy="371.1" r="2" fill="#2d96ea"/>
<circle cx="768.3" cy="359.0" r="2" fill="#23aec3"/>
<circle cx="769.7" cy="360.1" r="2" fill="#24acc9"/>
<circle cx="771.6" cy="348.4" r="2" fill="#20c390"/>
<circle cx="771.0" cy="368.9" r="2" fill="#2b9ae6"/>
<circle cx="774.3" cy="365.3" r="2" fill="#28a0e0"/>
<circle cx="778.5" cy="363.4" r="2" fill="#27a4d8"/>
<circle cx="779.6" cy="368.9" r="2" fill="#2b9ae6"/>
<circle cx="782.6" cy="357.9" r="2" fill="#22b1be"/>
<circle cx="788.1" cy="357.1" r="2" fill="#22b3ba"/>
<circle cx="791.7" cy="337.4" r="2" fill="#17da4f"/>
<circle cx="797.2" cy="353.5" r="2" fill="#20baa9"/>
<circle cx="799.8" cy="355.7" r="2" fill="#21b6b3"/>
<circle cx="806.8" cy="346.2" r="2" fill="#20c686"/>
<circle cx="810.8" cy="345.1" r="2" fill="#20c880"/>
<circle cx="812.3" cy="348.4" r="2" fill="#20c390"/>
<circle cx="806.4" cy="350.2" r="2" fill="#20c099"/>
<circle cx="808.2" cy="352.7" r="2" fill="#20bca5"/>
<circle cx="813.0" cy="351.6" r="2" fill="#20bda0"/>
<circle cx="811.5" cy="355.7" r="2" fill="#21b6b3"/>
<circle cx="815.2" cy="337.4" r="2" fill="#17da4f"/>
<circle cx="818.5" cy="342.9" r="2" fill="#1dcd72"/>
<circle cx="816.3" cy="349.5" r="2" fill="#20c195"/>
<circle cx="819.9" cy="348.4" r="2" fill="#20c390"/>
<circle cx="822.5" cy="340.3" r="2" fill="#1ad362"/>
<circle cx="825.8" cy="339.6" r="2" fill="#19d55d"/>
<circle cx="822.9" cy="344.0" r="2" fill="#1fcb79"/>
<circle cx="829.8" cy="342.9" r="2" fill="#1dcd72"/>
<circle cx="832.8" cy="344.0" r="2" fill="#1fcb79"/>
<circle cx="831.7" cy="333.0" r="2" fill="#19e03c"/>
<circle cx="833.7" cy="330.8" r="2" fill="#1ee037"/>
<circle cx="832.6" cy="321.3" r="2" fill="#35e023"/>
<circle cx="836.1" cy="333.0" r="2" fill="#19e03c"/>
<circle cx="841.4" cy="330.7" r="2" fill="#1ee037"/>
<circle cx="843.3" cy="331.7" r="2" fill="#1ce039"/>
<circle cx="845.8" cy="329.8" r="2" fill="#20e035"/>
<circle cx="848.0" cy="332.0" r="2" fill="#1be03a"/>
<circle cx="840.4" cy="335.3" r="2" fill="#14df42"/>
<circle cx="842.7" cy="336.5" r="2" fill="#16dc4a"/>
<circle cx="844.9" cy="337.4" r="2" fill="#17da4f"/>
<circle cx="841.4" cy="340.8" r="2" fill="#1bd265"/>
<circle cx="851.5" cy="327.7" r="2" fill="#26e030"/>
<circle cx="853.4" cy="329.8" r="2" fill="#20e035"/>
<circle cx="852.8" cy="322.3" r="2" fill="#33e025"/>
<circle cx="855.3" cy="323.5" r="2" fill="#30e028"/>
<circle cx="855.0" cy="316.8" r="2" fill="#4fe11d"/>
<circle cx="861.6" cy="322.3" r="2" fill="#33e025"/>
<circle cx="864.4" cy="322.3" r="2" fill="#33e025"/>
<circle cx="863.9" cy="327.7" r="2" fill="#26e030"/>
<circle cx="863.1" cy="305.0" r="2" fill="#a8e707"/>
<circle cx="866.4" cy="312.6" r="2" fill="#6ee31a"/>
<circle cx="871.7" cy="310.3" r="2" fill="#7ee418"/>
<circle cx="871.7" cy="317.6" r="2" fill="#49e11e"/>
<circle cx="872.3" cy="318.9" r="2" fill="#40e01f"/>
<circle cx="877.4" cy="320.1" r="2" fill="#38e020"/>
<circle cx="882.0" cy="317.9" r="2" fill="#47e11e"/>
<circle cx="885.3" cy="321.4" r="2" fill="#35e023"/>
<circle cx="872.7" cy="299.6" r="2" fill="#c9e800"/>
<circle cx="881.2" cy="305.9" r="2" fill="#a1e60a"/>
<circle cx="883.0" cy="303.7" r="2" fill="#b2e802"/>
<circle cx="885.3" cy="308.4" r="2" fill="#8de512"/>
<circle cx="887.5" cy="306.2" r="2" fill="#9ee60b"/>
<circle cx="890.4" cy="301.7" r="2" fill="#bee800"/>
<circle cx="891.2" cy="309.3" r="2" fill="#86e416"/>
<circle cx="892.1" cy="307.5" r="2" fill="#94e50f"/>
<circle cx="895.9" cy="302.7" r="2" fill="#b9e800"/>
<circle cx="899.4" cy="304.0" r="2" fill="#b0e703"/>
<circle cx="896.9" cy="298.7" r="2" fill="#cde800"/>
<circle cx="902.2" cy="299.9" r="2" fill="#c7e800"/>
<circle cx="903.9" cy="298.9" r="2" fill="#cce800"/>
<circle cx="904.2" cy="296.2" r="2" fill="#d9e800"/>
<circle cx="903.5" cy="304.0" r="2" fill="#b0e703"/>
<circle cx="903.9" cy="308.4" r="2" fill="#8de512"/>
<circle cx="908.0" cy="300.8" r="2" fill="#c2e800"/>
<circle cx="910.8" cy="295.1" r="2" fill="#dee800"/>
<circle cx="911.8" cy="298.7" r="2" fill="#cde800"/>
<circle cx="914.8" cy="283.5" r="2" fill="#efc600"/>
<circle cx="916.5" cy="312.6" r="2" fill="#6ee31a"/>
<circle cx="918.6" cy="303.0" r="2" fill="#b8e800"/>
<circle cx="920.3" cy="296.2" r="2" fill="#d9e800"/>
<circle cx="921.9" cy="299.6" r="2" fill="#c9e800"/>
<circle cx="926.6" cy="306.8" r="2" fill="#9ae60d"/>
<circle cx="927.5" cy="305.9" r="2" fill="#a1e60a"/>
<circle cx="929.7" cy="309.3" r="2" fill="#86e416"/>
<circle cx="932.0" cy="311.5" r="2" fill="#75e319"/>
<circle cx="935.4" cy="314.7" r="2" fill="#5ee21c"/>
<circle cx="932.0" cy="319.1" r="2" fill="#3ee01f"/>
<circle cx="927.8" cy="288.8" r="2" fill="#ebd900"/>
<circle cx="930.7" cy="292.0" r="2" fill="#e9e400"/>
<circle cx="934.8" cy="302.1" r="2" fill="#bce800"/>
<circle cx="937.1" cy="303.0" r="2" fill="#b8e800"/>
<circle cx="942.1" cy="288.8" r="2" fill="#ebd900"/>
<circle cx="942.4" cy="307.1" r="2" fill="#97e60e"/>
<circle cx="943.9" cy="298.7" r="2" fill="#cde800"/>
<circle cx="943.4" cy="316.0" r="2" fill="#55e21d"/>
<circle cx="944.2" cy="311.5" r="2" fill="#75e319"/>
</g>
<circle cx="578" cy="346.5" r="54.2" fill="none" stroke="#c87414" stroke-opacity="0.9" stroke-width="2.6" stroke-dasharray="6 3.4"/>
<circle cx="554.5" cy="340" r="54.5" fill="none" stroke="#828282" stroke-width="2.5"/>
<rect x="558" y="277" width="40.5" height="31" fill="none" stroke="#c000c0" stroke-width="2" stroke-dasharray="9.5 2.5"/>
<rect x="552.2" y="275.2" width="2.8" height="22.7" fill="#c000c0"/>
</svg></body></html>
